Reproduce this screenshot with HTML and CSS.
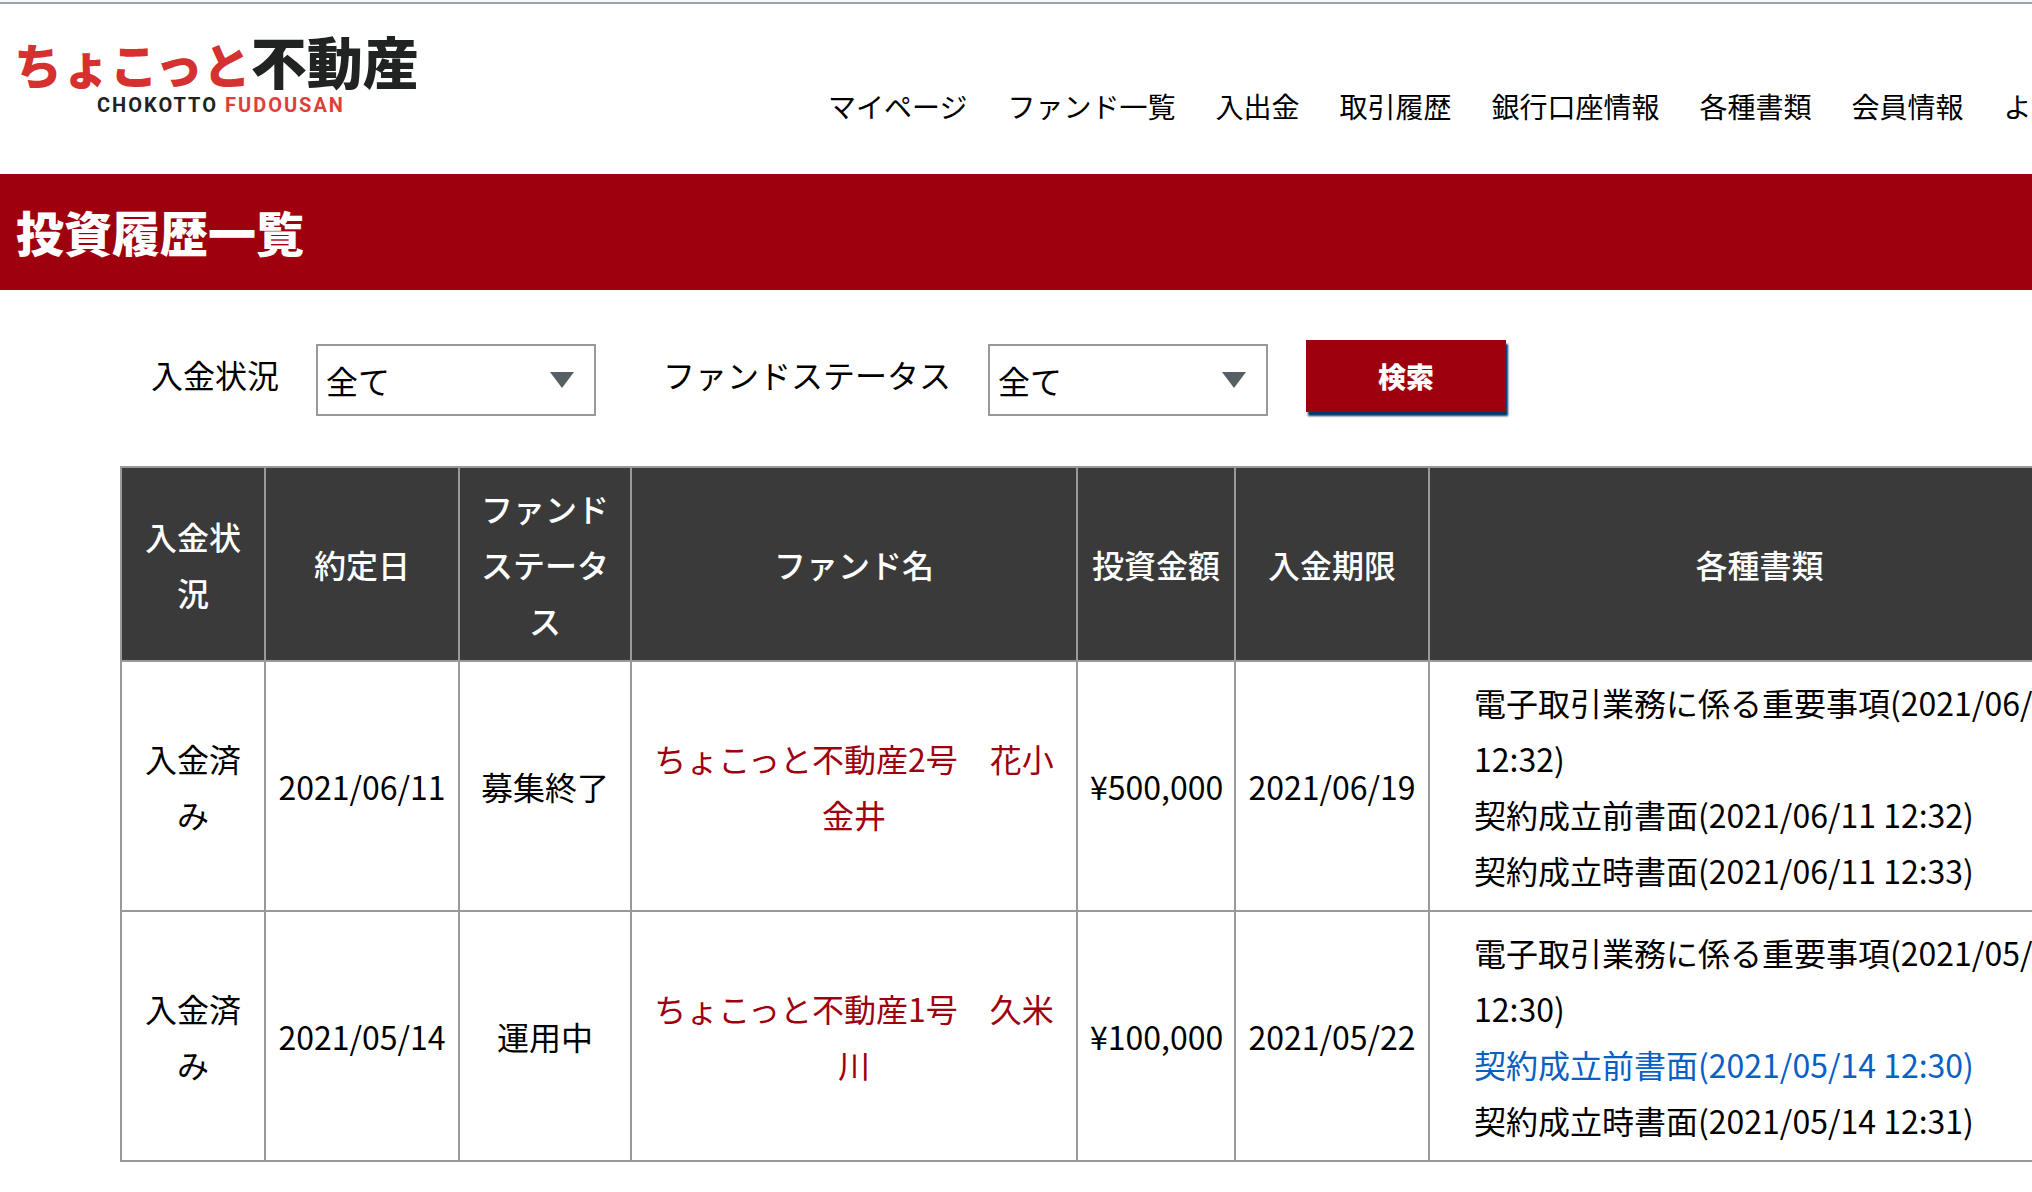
FILE: index.html
```html
<!DOCTYPE html>
<html lang="ja">
<head>
  <meta charset="UTF-8">
  <meta name="viewport" content="width=device-width, initial-scale=1.0">
  <title>投資履歴一覧 | ちょこっと不動産</title>
  <link rel="stylesheet" href="styles.css">
</head>
<body>
  <header id="header">
    <a href="#" class="logo">
      <span class="logo_main"><span class="kana">ちょこっと</span><span class="kanji">不動産</span></span>
      <span class="logo_sub">CHOKOTTO <span class="red">FUDOUSAN</span></span>
    </a>
    <nav>
      <ul class="gnav">
        <li><a href="#">マイページ</a></li>
        <li><a href="#">ファンド一覧</a></li>
        <li><a href="#">入出金</a></li>
        <li><a href="#">取引履歴</a></li>
        <li><a href="#">銀行口座情報</a></li>
        <li><a href="#">各種書類</a></li>
        <li><a href="#">会員情報</a></li>
        <li><a href="#">よくある質問</a></li>
      </ul>
    </nav>
  </header>
  <h1 class="page_title">投資履歴一覧</h1>
  <main>
    <form class="search">
      <label for="payment">入金状況</label>
      <div class="select">
        <select id="payment">
          <option>全て</option>
        </select>
      </div>
      <label for="status">ファンドステータス</label>
      <div class="select">
        <select id="status">
          <option>全て</option>
        </select>
      </div>
      <button type="button" class="btn">検索</button>
    </form>
    <table class="history">
      <thead>
        <tr>
          <th class="col_payment">入金状況</th>
          <th class="col_date">約定日</th>
          <th class="col_status">ファンドステータス</th>
          <th class="col_name">ファンド名</th>
          <th class="col_price">投資金額</th>
          <th class="col_date">入金期限</th>
          <th>各種書類</th>
        </tr>
      </thead>
      <tbody>
        <tr>
          <td>入金済み</td>
          <td>2021/06/11</td>
          <td>募集終了</td>
          <td><a href="#" class="fund">ちょこっと不動産2号　花小金井</a></td>
          <td>¥500,000</td>
          <td>2021/06/19</td>
          <td class="docs">
            <ul>
              <li><a href="#">電子取引業務に係る重要事項(2021/06/11 12:32)</a></li>
              <li><a href="#">契約成立前書面(2021/06/11 12:32)</a></li>
              <li><a href="#">契約成立時書面(2021/06/11 12:33)</a></li>
            </ul>
          </td>
        </tr>
        <tr>
          <td>入金済み</td>
          <td>2021/05/14</td>
          <td>運用中</td>
          <td><a href="#" class="fund">ちょこっと不動産1号　久米川</a></td>
          <td>¥100,000</td>
          <td>2021/05/22</td>
          <td class="docs">
            <ul>
              <li><a href="#">電子取引業務に係る重要事項(2021/05/14 12:30)</a></li>
              <li><a href="#" class="on">契約成立前書面(2021/05/14 12:30)</a></li>
              <li><a href="#">契約成立時書面(2021/05/14 12:31)</a></li>
            </ul>
          </td>
        </tr>
      </tbody>
    </table>
  </main>
</body>
</html>
```
FILE: styles.css
```css
* { margin: 0; padding: 0; box-sizing: border-box; }
body {
  font-family: "Noto Sans CJK JP", sans-serif;
  font-size: 32px;
  line-height: 56px;
  color: #000;
  background: #fff;
  border-top: 2px solid #f3f8fd;
  overflow-x: hidden;
}
ul { list-style: none; }
a {
  color: inherit;
  text-decoration: none;
}

/* header */
#header {
  display: flex;
  align-items: flex-start;
  height: 172px;
  padding-left: 14px;
  border-top: 2px solid #a0a0a0;
}
.logo {
  flex: none;
  width: 403px;
  padding-top: 24px;
  font-weight: 900;
  color: #202322;
}
.logo_main {
  display: flex;
  align-items: baseline;
  line-height: 64px;
  white-space: nowrap;
}
.kana {
  font-size: 48px;
  color: #d5322f;
}
.kanji { font-size: 56px; }
.logo_sub {
  display: block;
  padding-left: 83px;
  font-family: Roboto, sans-serif;
  font-size: 20px;
  font-weight: 700;
  line-height: 20px;
  letter-spacing: 2px;
}
.logo_sub .red { color: #dc3f3c; }
.gnav {
  display: flex;
  gap: 40px;
  margin-left: 411px;
  padding-top: 74px;
  font-size: 28px;
  white-space: nowrap;
}

/* title */
.page_title {
  padding: 29px 16px 31px;
  background: #9e000e;
  color: #fff;
  font-size: 48px;
  font-weight: 900;
}

/* search */
.search {
  display: flex;
  align-items: flex-start;
  padding: 50px 0 50px 151px;
  white-space: nowrap;
}
.search label {
  margin-right: 37px;
  line-height: 68px;
}
.select {
  position: relative;
  width: 280px;
  margin: 4px 67px 0 0;
}
.select:last-of-type { margin-right: 38px; }
.select select {
  width: 100%;
  height: 72px;
  padding: 0 8px;
  border: 2px solid #999;
  border-radius: 0;
  background: #fff;
  color: #000;
  font: inherit;
  appearance: none;
}
.select::after {
  content: "";
  position: absolute;
  top: 28px;
  right: 22px;
  border: 12px solid transparent;
  border-top: 16px solid #565f63;
  border-bottom: 0;
  pointer-events: none;
}
.btn {
  width: 200px;
  height: 72px;
  border: 0;
  background: #9e000e;
  box-shadow: 2px 4px 2px #003668;
  color: #fff;
  font-family: inherit;
  font-size: 28px;
  font-weight: 900;
}

/* table */
.history {
  width: 97%;
  margin-left: 120px;
  border-collapse: collapse;
  table-layout: fixed;
}
.history th,
.history td {
  padding: 12px;
  border: 2px solid #999;
  text-align: center;
  vertical-align: middle;
}
.history th {
  background: #3a3a3a;
  color: #fff;
  font-weight: 500;
}
.history .col_payment { width: 144px; }
.history .col_date { width: 194px; }
.history .col_status { width: 172px; }
.history .col_name { width: 446px; }
.history .col_price { width: 158px; }
.fund { color: #9e000e; }
.history .docs {
  padding-left: 44px;
  text-align: left;
}
.docs .on { color: #0860c4; }
```
